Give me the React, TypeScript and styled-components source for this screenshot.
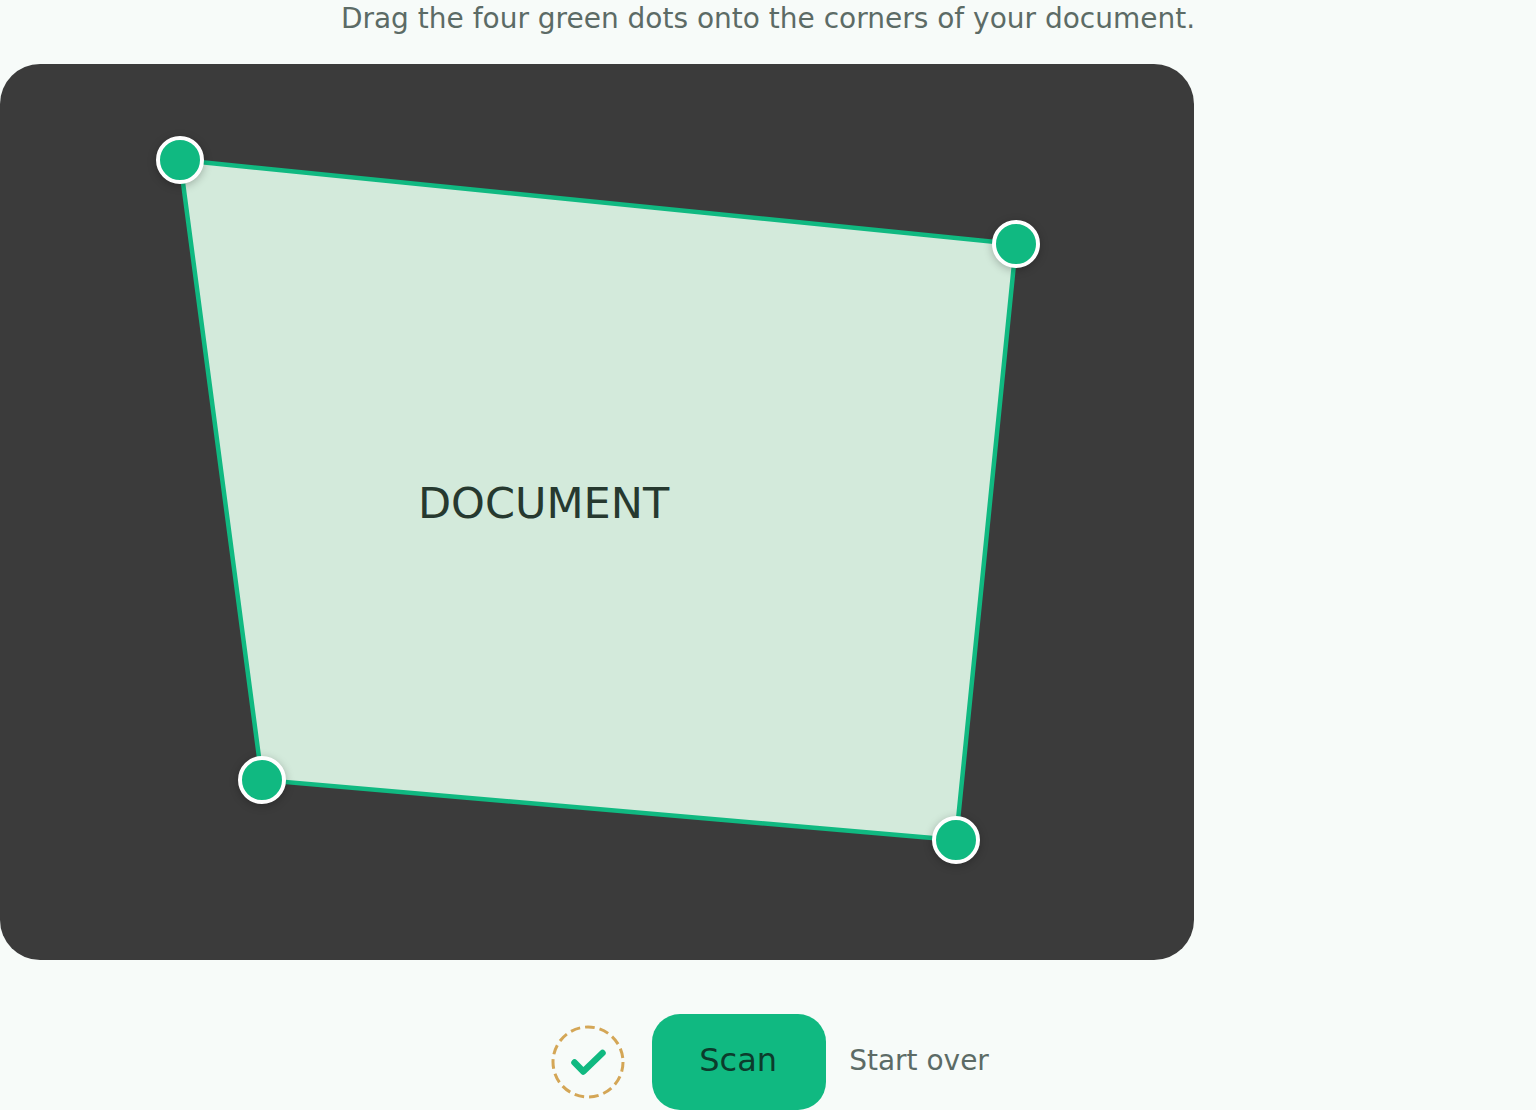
import { createGlobalStyle, styled } from "styled-components";

const GlobalStyle = createGlobalStyle`
  html, body {
    margin: 0;
    padding: 0;
    background: #f7fbf9;
    font-family: "DejaVu Sans", sans-serif;
  }
  body {
    overflow: hidden;
  }
`;

const Page = styled.div`
  height: 1110px;
  display: flex;
  flex-direction: column;
  align-items: center;
  overflow: hidden;
`;

const Hint = styled.p`
  margin: 0;
  height: 64px;
  padding-top: 2px;
  box-sizing: border-box;
  font-size: 28px;
  line-height: 34px;
  color: #5c6b66;
  white-space: nowrap;
`;

const Stage = styled.div`
  position: relative;
  align-self: flex-start;
  width: 1194px;
  height: 896px;
  flex: none;
  border-radius: 40px;
  background: #3b3b3b;
  overflow: hidden;
`;

const Quad = styled.svg`
  display: block;
  width: 100%;
  height: 100%;
`;

const Label = styled.span`
  position: absolute;
  left: 418px;
  top: 414px;
  font-size: 43px;
  line-height: 50px;
  color: #26392f;
  white-space: nowrap;
`;

const Handle = styled.div<{ $x: number; $y: number }>`
  position: absolute;
  left: ${({ $x }) => $x - 24}px;
  top: ${({ $y }) => $y - 24}px;
  width: 48px;
  height: 48px;
  box-sizing: border-box;
  border: 4px solid #ffffff;
  border-radius: 50%;
  background: #10b981;
  box-shadow: 0 2px 8px rgba(0, 0, 0, 0.25);
`;

const Controls = styled.div`
  display: flex;
  align-items: center;
  margin-top: 54px;
  margin-left: 1px;
`;

const Badge = styled.svg`
  display: block;
  width: 80px;
  height: 80px;
  flex: none;
  margin-right: 24px;
`;

const ScanButton = styled.button`
  width: 174px;
  height: 96px;
  margin-right: 23px;
  padding: 0 2px 4px 0;
  border: none;
  border-radius: 28px;
  background: #10b981;
  color: #0c3b2c;
  font-family: inherit;
  font-size: 32px;
  cursor: pointer;
`;

const ResetButton = styled.button`
  padding: 0 0 4px;
  border: none;
  background: none;
  color: #5c6b66;
  font-family: inherit;
  font-size: 28px;
  cursor: pointer;
`;

const corners = [
  { x: 180, y: 96 },
  { x: 1016, y: 180 },
  { x: 956, y: 776 },
  { x: 262, y: 716 },
];

export default function App() {
  return (
    <>
      <GlobalStyle />
      <Page>
        <Hint>Drag the four green dots onto the corners of your document.</Hint>
        <Stage>
          <Quad viewBox="0 0 1194 896">
            <polygon
              points={corners.map((c) => `${c.x},${c.y}`).join(" ")}
              fill="#d3eadb"
              stroke="#10b981"
              strokeWidth="4.5"
            />
          </Quad>
          <Label>DOCUMENT</Label>
          {corners.map((c) => (
            <Handle key={c.x} $x={c.x} $y={c.y} />
          ))}
        </Stage>
        <Controls>
          <Badge viewBox="0 0 80 80">
            <circle
              cx="40"
              cy="40"
              r="35"
              fill="none"
              stroke="#d4a656"
              strokeWidth="3"
              strokeDasharray="9.7 5"
            />
            <path
              d="M26.5 40.5 L35.3 49.5 L54.5 31"
              fill="none"
              stroke="#10b981"
              strokeWidth="6.5"
              strokeLinecap="round"
              strokeLinejoin="round"
            />
          </Badge>
          <ScanButton>Scan</ScanButton>
          <ResetButton>Start over</ResetButton>
        </Controls>
      </Page>
    </>
  );
}
